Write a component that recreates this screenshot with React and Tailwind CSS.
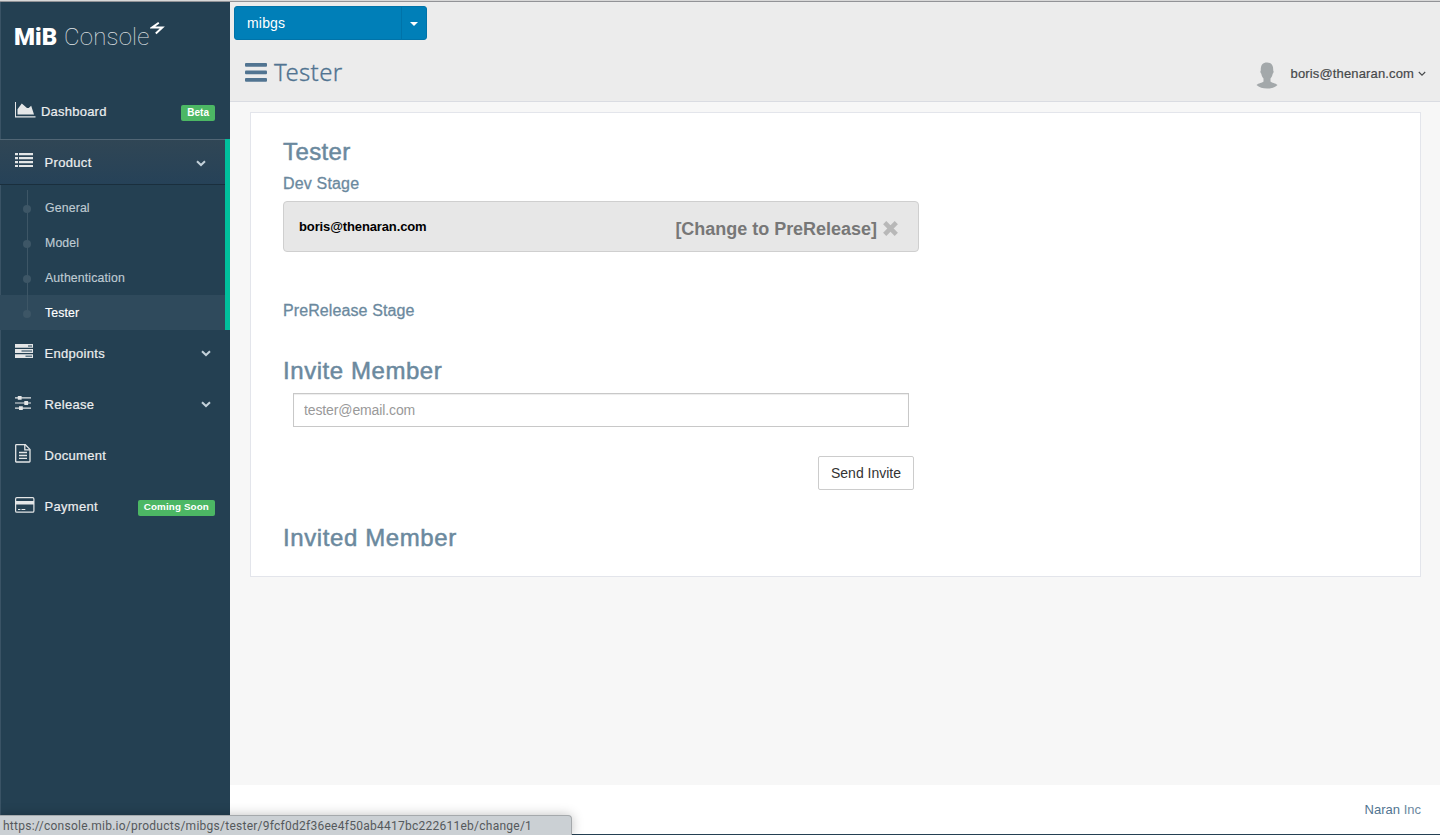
import React from "react";

const AreaIcon = () => (
  <svg width="21" height="16" viewBox="0 0 21 16" fill="#e4e6e7">
    <path d="M0 0h1v14.2h19.5V15.4H0z" />
    <path d="M2.5 12.5V7.2L6.8 1.500l5.200 4.600 1.700-.2L16.200 3.800l2.800 8.700z" />
  </svg>
);

const ListIcon = () => (
  <svg width="18" height="14" viewBox="0 0 18 14" fill="#e4e6e7">
    <path d="M0 0h3v2.200H0zM4 0h14v2.200H4zM0 4h3v2.200H0zM4 4h14v2.200H4zM0 8h3v2.200H0zM4 8h14v2.200H4zM0 12h3v2H0zM4 12h14v2H4z" />
  </svg>
);

const TasksIcon = () => (
  <svg width="18" height="14" viewBox="0 0 18 14">
    <path fill="#e4e6e7" d="M0 0h18v3.8H0zM0 5.1h18v3.8H0zM0 10.2h18V14H0z" />
    <path fill="#5c7483" d="M13 1.2h4v1.5h-4zM6.5 6.3H17v1.5H6.500zM10.500 11.400H17v1.500h-6.500z" />
  </svg>
);

const SlidersIcon = () => (
  <svg className="mt-[2px]" width="16" height="14" viewBox="0 0 16 14" fill="#e4e6e7">
    <path d="M0 1.300h16v1.200H0zM0 6.400h16v1.200H0zM0 11.500h16v1.200H0z" />
    <path d="M2.800 0h3.800v3.800H2.800zM9.300 5.100h3.800v3.800H9.300zM4 10.200h3.800V14H4z" />
  </svg>
);

const FileIcon = () => (
  <svg width="16" height="19" viewBox="0 0 16 19" fill="none" stroke="#e4e6e7" strokeWidth="1.300">
    <path d="M1.300.7h9L15 5.400v11.900a.7.7 0 0 1-.7.700h-13a.6.600 0 0 1-.6-.7v-16A.6.600 0 0 1 1.300.700z" />
    <path d="M9.800.8v5h5M4 8.500h8M4 11.500h8M4 14.300h8" />
  </svg>
);

const CardIcon = () => (
  <svg className="mt-[2px]" width="20" height="16" viewBox="0 0 20 16">
    <rect x=".6" y=".6" width="18.300" height="14.600" rx="1.300" fill="none" stroke="#e4e6e7" strokeWidth="1.200" />
    <path fill="#e4e6e7" d="M1 4h18v3.500H1zM3 12h2.400v1.100H3zM6.500 12h3.800v1.100H6.500z" />
  </svg>
);

const Chevron = () => (
  <svg width="10" height="7" viewBox="0 0 10 7" fill="none" stroke="#c3d1da" strokeWidth="2">
    <path d="M1 1.200 5 5l4-3.800" />
  </svg>
);

function NavRow({ icon, label, badge, chevron }) {
  return (
    <a className="flex h-[45px] items-center pl-[15px] pr-[15px] pt-[2px]">
      <span className="mb-[5px] flex w-[29.500px]">{icon}</span>
      <span className="text-[13px] tracking-[0.3px] text-[#eceeef] [-webkit-text-stroke:0.2px]">{label}</span>
      {badge && (
        <span className="ml-auto mt-[2px] flex h-4 items-center rounded-[2px] bg-[#4cb764] px-[6px] text-[9.800px] font-bold tracking-[0.14px] text-white">
          {badge}
        </span>
      )}
      {chevron && <span className="ml-auto mr-[4px]"><Chevron /></span>}
    </a>
  );
}

function SubItem({ label, active, last }) {
  return (
    <li className={active ? "relative flex h-[35px] items-center bg-[#2f4a5c] pl-[45px] text-white" : "relative flex h-[35px] items-center pl-[45px] text-[#bfcbd2]"}>
      <span className={last ? "absolute left-[27px] top-0 h-[18px] w-px bg-[#3d5666]" : "absolute left-[27px] top-0 h-[35px] w-px bg-[#3d5666]"} />
      <span className="absolute left-[23px] top-[15px] size-2 rounded-full bg-[#3d5666]" />
      <span className="mt-[2px] text-[12.300px] tracking-[0.14px] [-webkit-text-stroke:0.15px]">{label}</span>
    </li>
  );
}

function Sidebar() {
  return (
    <aside className="flex w-[230px] shrink-0 flex-col border-l border-[#3a5365] bg-[#244052]">
      <div className="-ml-px flex flex-col">
        <div className="flex h-[87px] items-start pl-[14px] pt-[19px]">
          <div className="flex items-center font-['Roboto'] text-[24px] leading-8 text-white">
            <span className="w-[50px] font-black">MiB</span>
            <span className="font-thin tracking-[0.2px] text-[#e5e9eb]">Console</span>
          </div>
          <svg className="ml-px mt-px" width="15" height="14" viewBox="0 0 15 14" fill="none" stroke="#fff" strokeWidth="2">
            <path d="M8.800.8 2.300 5.400h10L5.800 11.400" />
          </svg>
        </div>
        <a className="flex h-[45px] items-center pl-[15px] pr-[15px]">
          <span className="mb-[3px] flex w-[26px]"><AreaIcon /></span>
          <span className="text-[13px] tracking-[0.22px] text-[#eceeef] [-webkit-text-stroke:0.2px]">Dashboard</span>
          <span className="ml-auto mt-[2px] flex h-4 items-center rounded-[2px] bg-[#4cb764] px-[6px] text-[10px] font-bold text-white">Beta</span>
        </a>
        <div className="mt-[5px] border-r-[5px] border-[#00bf9c]">
          <a className="flex h-[46px] items-center border-b border-t border-b-[#1a2f3d] border-t-[#516675] bg-linear-to-b from-[#304655] to-[#264258] pl-[15px] pr-[19px]">
            <span className="mb-[5px] flex w-[29.500px]"><ListIcon /></span>
            <span className="mt-[2px] text-[13px] tracking-[0.33px] text-[#eceeef] [-webkit-text-stroke:0.2px]">Product</span>
            <span className="ml-auto mt-[2px]"><Chevron /></span>
          </a>
          <ul className="relative pt-[5px]">
            <SubItem label="General" />
            <SubItem label="Model" />
            <SubItem label="Authentication" />
            <SubItem label="Tester" active last />
          </ul>
        </div>
        <nav className="flex flex-col gap-[6px]">
          <NavRow icon={<TasksIcon />} label="Endpoints" chevron />
          <NavRow icon={<SlidersIcon />} label="Release" chevron />
          <NavRow icon={<FileIcon />} label="Document" />
          <NavRow icon={<CardIcon />} label="Payment" badge="Coming Soon" />
        </nav>
      </div>
    </aside>
  );
}

function Header() {
  return (
    <header className="h-[100px] border-b border-[#dadce2] bg-[#ececec]">
      <div className="ml-1 flex h-[38px] items-end">
        <div className="flex h-[34px] w-[193px] rounded-[3px] border border-[#0073a9] bg-[#007fb8] text-sm text-white">
          <span className="flex flex-1 items-center pl-3 tracking-[0.18px]">mibgs</span>
          <span className="flex w-[25px] items-center justify-center border-l border-[#0073a9] pt-[2px]">
            <svg width="8" height="4" viewBox="0 0 8 4" fill="#fff"><path d="M0 0h8L4 4z" /></svg>
          </span>
        </div>
      </div>
      <div className="flex h-[61px] items-center justify-between pl-[15px] pr-[14px] pt-[3px]">
        <h1 className="flex items-center gap-[7px] text-[24px] text-[#517491]">
          <svg className="mt-px" width="22" height="19" viewBox="0 0 22 19" fill="#517491">
            <rect width="22" height="3.800" rx="1" /><rect y="7.500" width="22" height="3.800" rx="1" /><rect y="15" width="22" height="3.800" rx="1" />
          </svg>
          <span className="font-['Noto_Sans'] font-light tracking-[0.35px] [-webkit-text-stroke:0.3px]">Tester</span>
        </h1>
        <div className="flex items-center pt-[3px]">
          <svg className="mr-[13px] mt-[4px]" width="22" height="27" viewBox="0 0 22 27" fill="#a3a8aa">
            <path d="M11 .5c4.500 0 6.500 2.900 6.200 8 .7.400.5 2.600-.5 3.200-.4 2.200-1.100 3.600-2.200 4.700v3c.8 1.300 5.300 1.500 7 3.600C19 25.500 15 26.500 11 26.500S3 25.500.5 23c1.700-2.100 6.200-2.300 7-3.600v-3c-1.100-1.100-1.800-2.500-2.200-4.700-1-.6-1.200-2.800-.5-3.200C4.500 3.400 6.500.5 11 .5z" />
          </svg>
          <span className="text-[13px] tracking-[0.14px] text-[#46484a] [-webkit-text-stroke:0.2px]">boris@thenaran.com</span>
          <svg className="ml-1" width="8" height="6" viewBox="0 0 8 6" fill="none" stroke="#46484a" strokeWidth="1.100"><path d="m.8 1 3.200 3.200L7.200 1" /></svg>
        </div>
      </div>
    </header>
  );
}

export default function App() {
  return (
    <div className="relative flex h-[835px] w-[1440px] flex-col overflow-hidden bg-[#f7f7f7] font-['Liberation_Sans',sans-serif]">
      <div className="h-[2px] shrink-0 border-b border-[#929397] bg-[#d8d8d8]" />
      <div className="flex min-h-0 flex-1">
        <Sidebar />
        <div className="flex min-w-0 flex-1 flex-col">
          <Header />
          <main className="flex-1 pl-5 pr-[19px] pt-[10px]">
            <section className="h-[465px] border border-[#e3e5eb] bg-white pl-8 pt-[24px] text-[#6b899e]">
              <h2 className="h-[32px] text-[24px] leading-[30px] tracking-[0.4px] [-webkit-text-stroke:0.5px]">Tester</h2>
              <h3 className="h-[32px] text-[16px] leading-[30px] tracking-[0.17px] [-webkit-text-stroke:0.3px]">Dev Stage</h3>
              <div className="flex h-[51px] w-[636px] items-center justify-between rounded-[4px] border border-[#cfcfcf] bg-[#e7e7e7] pl-[15px] pr-[20px]">
                <span className="text-[13px] font-bold tracking-[-0.12px] text-black">boris@thenaran.com</span>
                <span className="flex items-center gap-[6px] pt-[5px] text-[18px] font-bold tracking-[-0.02px] text-[#777]">
                  [Change to PreRelease]
                  <svg className="mb-[2px]" width="15" height="15" viewBox="0 0 15 15" stroke="#b8b8b8" strokeWidth="4.500"><path d="m1.700 1.700 11.600 11.600m0-11.600L1.700 13.300" /></svg>
                </span>
              </div>
              <h3 className="mt-[48px] h-[22px] text-[16px] leading-[22px] tracking-[0.1px] [-webkit-text-stroke:0.3px]">PreRelease Stage</h3>
              <h2 className="mt-[33px] h-[38px] text-[24px] leading-[32px] tracking-[0.56px] [-webkit-text-stroke:0.5px]">Invite Member</h2>
              <input
                className="ml-[10px] block h-[34px] w-[616px] border border-[#c8c8c8] bg-white px-[10px] text-sm tracking-[-0.12px] shadow-[inset_0_1px_1px_rgba(0,0,0,0.075)] placeholder:text-[#999]"
                placeholder="tester@email.com"
              />
              <button className="ml-[535px] mt-[29px] block h-[34px] w-[96px] rounded-[2px] border border-[#ccc] bg-white text-sm text-[#333]">Send Invite</button>
              <h2 className="mt-[32px] text-[24px] leading-[32px] tracking-[0.6px] [-webkit-text-stroke:0.5px]">Invited Member</h2>
            </section>
          </main>
          <footer className="flex h-[50px] items-center justify-end border-b border-[#244052] bg-white pr-[19px] text-[13px] text-[#6d899f]">
            <span><span className="text-[#517491]">Naran</span> Inc</span>
          </footer>
        </div>
      </div>
      <div className="absolute bottom-0 left-0 flex h-5 w-[572px] items-center rounded-tr-[4px] border-r border-t border-[#a5a9ac] bg-[#cbd0d4] pl-[3px] font-['Roboto'] text-[12px] tracking-[0.255px] text-[#55595c] shadow-[0_0_12px_rgba(0,0,0,0.25)]">
        https://console.mib.io/products/mibgs/tester/9fcf0d2f36ee4f50ab4417bc222611eb/change/1
      </div>
    </div>
  );
}
